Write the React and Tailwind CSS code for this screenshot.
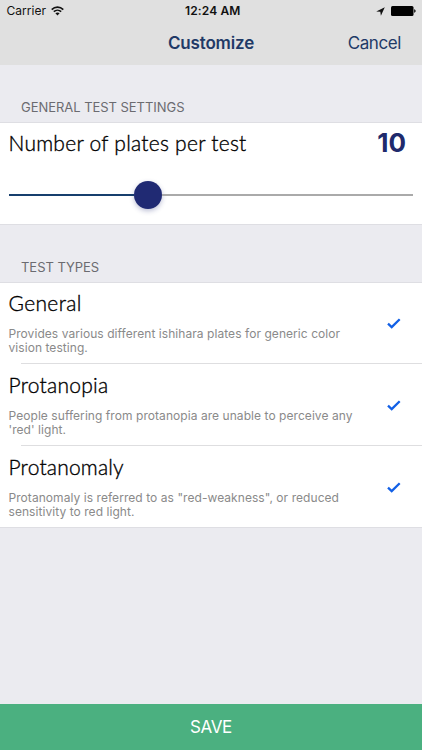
import { useState } from "react";

const testTypes = [
    {
        name: "General",
        lines: ["Provides various different ishihara plates for generic color", "vision testing."],
        titleClass: "tracking-[0.35px]",
    },
    {
        name: "Protanopia",
        lines: ["People suffering from protanopia are unable to perceive any", "'red' light."],
        titleClass: "tracking-[0.25px]",
    },
    {
        name: "Protanomaly",
        lines: ["Protanomaly is referred to as \"red-weakness\", or reduced", "sensitivity to red light."],
        titleClass: "tracking-[0.2px]",
    },
]

const WifiIcon = () => (
    <svg width="13" height="10" viewBox="0 0 13 10" fill="none" stroke="#111" strokeWidth="1.6">
        <path d="M0.7 3.6C4 0.3 9 0.3 12.3 3.6" />
        <path d="M2.8 5.7C4.9 3.7 8.1 3.7 10.2 5.7" />
        <path d="M6.5 9.4L4.4 7.3C5.6 6.2 7.4 6.2 8.6 7.3Z" fill="#111" stroke="none" />
    </svg>
)

const LocationIcon = () => (
    <svg width="9" height="9" viewBox="0 0 9 9" fill="#111">
        <path d="M8.8 0.2L4.9 8.7L4.3 4.8L0.2 4.4Z" />
    </svg>
)

const BatteryIcon = () => (
    <svg width="25" height="10" viewBox="0 0 25 10" fill="#000">
        <rect x="0" y="0" width="22.5" height="10" rx="1.5" />
        <path d="M23.2 3.2C25.1 3.7 25.1 6.3 23.2 6.8Z" />
    </svg>
)

const CheckIcon = () => (
    <svg className="mt-[2px]" width="14" height="11" viewBox="0 0 14 11" fill="none" stroke="#1260e6" strokeWidth="2.3">
        <path d="M1 5.6L4.7 9.1L12.7 1.2" />
    </svg>
)

const StatusBar = () => {
    return (
        <div className="grid grid-cols-3 items-center h-[22px] pl-[6.5px] pr-[6px] text-[12px] text-[#111]">
            <div className="flex items-center gap-[5px]">
                <span className="tracking-[0.05px]">Carrier</span>
                <WifiIcon />
            </div>
            <span className="pl-[3px] text-center font-semibold tracking-[0.15px] whitespace-nowrap">12:24 AM</span>
            <div className="flex items-center justify-end gap-[6px]">
                <LocationIcon />
                <BatteryIcon />
            </div>
        </div>
    )
}

const SectionTitle = ({ children }) => (
    <h2 className="h-[57px] shrink-0 pt-[33px] pl-[21px] text-[13px] leading-[18px] tracking-[-0.04px] text-[#6b6b70]">{children}</h2>
)

const App = () => {

    const [plates] = useState(10);

    return (
        <div className="flex flex-col w-full h-[750px] overflow-hidden bg-[#ebebf0] font-['Inter',sans-serif]">
            <header className="h-[65px] shrink-0 bg-[#e0e0e0]">
                <StatusBar />
                <div className="grid grid-cols-3 items-center h-[43px] pr-[21px] text-[17px] text-[#1f3a67]">
                    <h1 className="col-start-2 pl-[21px] text-center font-semibold tracking-[-0.15px]">Customize</h1>
                    <button className="text-right tracking-[-0.4px]">Cancel</button>
                </div>
            </header>

            <SectionTitle>GENERAL TEST SETTINGS</SectionTitle>
            <section className="h-[103px] shrink-0 border-y border-[#dedee3] bg-white">
                <div className="flex justify-between h-[42px] pl-[8.5px] pr-[16px]">
                    <span className="font-['Lato',sans-serif] font-light text-[21px] leading-[40px] tracking-[0.25px] text-black [-webkit-text-stroke:0.35px_#000]">Number of plates per test</span>
                    <span className="text-[26px] leading-[39px] font-bold text-[#202a6c]">{plates}</span>
                </div>
                <div className="flex items-center h-[59px] px-[9px]">
                    <div className="w-[125px] h-[2px] bg-[#173f6d]"></div>
                    <div className="w-[28px] h-[28px] rounded-full bg-[#202a73] shadow-[0_2px_5px_rgba(32,42,115,0.3)]"></div>
                    <div className="grow h-[2px] bg-[#aaaaaa]"></div>
                </div>
            </section>

            <SectionTitle>TEST TYPES</SectionTitle>
            <ul className="shrink-0 bg-white shadow-[inset_0_1px_#dedee3]">
                {testTypes.map((item, index) => {
                    return (
                        <li key={index}>
                            <div className="flex items-center justify-between h-[81px] pl-[8.5px] pr-[21px]">
                                <div className="h-full">
                                    <h3 className={`pt-[6px] font-['Lato',sans-serif] font-light text-[21px] leading-[30px] text-black [-webkit-text-stroke:0.35px_#000] ${item.titleClass}`}>{item.name}</h3>
                                    <div className="pt-[9px] text-[12px] leading-[14.4px] tracking-[0.06px] whitespace-nowrap text-[#8a8a8a]">
                                        {item.lines.map((line) => <p key={line}>{line}</p>)}
                                    </div>
                                </div>
                                <CheckIcon />
                            </div>
                            <div className={index < testTypes.length - 1 ? "h-px ml-[21px] bg-[#dedee0]" : "h-px bg-[#dedee3]"}></div>
                        </li>
                    )
                })
                }
            </ul>

            <button className="mt-auto h-[46px] shrink-0 pt-[2px] bg-[#4bb080] text-[17px] tracking-[-0.4px] text-white">SAVE</button>
        </div>
    )
}

export default App;
